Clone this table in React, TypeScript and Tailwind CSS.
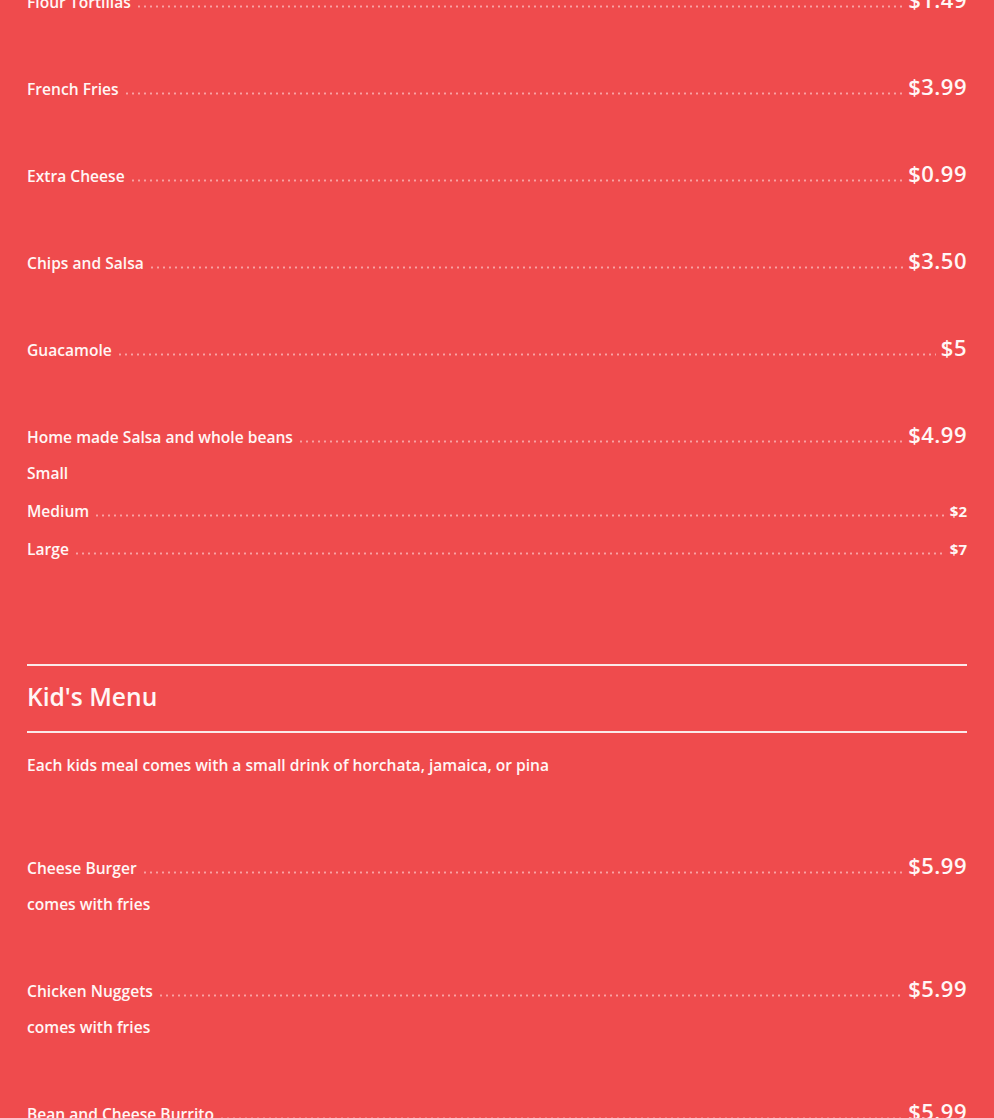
import React from "react";

type Sub = { name: string; price?: string };
type Item = { name: string; price: string; subs?: Sub[] };

const leader =
  "flex-1 mx-[5px] h-[3px] bg-[radial-gradient(circle,rgba(255,220,220,0.6)_0.9px,transparent_1.3px)] bg-[length:6px_3px] bg-repeat-x";

function Row({ item }: { item: Item }) {
  return (
    <div className={item.subs ? "-mb-[8px]" : ""}>
      <div className="flex items-baseline h-[26px]">
        <span className="text-[15.6px] font-semibold">{item.name}</span>
        <div className={leader} />
        <span className="text-[22px] font-semibold tracking-[0.5px]">{item.price}</span>
      </div>
      {item.subs?.map((s, i) => (
        <div
          key={s.name}
          className={"flex items-baseline h-[26px] " + (i === 0 ? "mt-[18px]" : "mt-[12px]")}
        >
          <span className="text-[15.6px] font-semibold">{s.name}</span>
          {s.price && (
            <>
              <div className={leader} />
              <span className="text-[15px] font-bold">{s.price}</span>
            </>
          )}
        </div>
      ))}
    </div>
  );
}

const sides: Item[] = [
  { name: "Flour Tortillas", price: "$1.49" },
  { name: "French Fries", price: "$3.99" },
  { name: "Extra Cheese", price: "$0.99" },
  { name: "Chips and Salsa", price: "$3.50" },
  { name: "Guacamole", price: "$5" },
  {
    name: "Home made Salsa and whole beans",
    price: "$4.99",
    subs: [{ name: "Small" }, { name: "Medium", price: "$2" }, { name: "Large", price: "$7" }],
  },
];

const kids: Item[] = [
  { name: "Cheese Burger", price: "$5.99", subs: [{ name: "comes with fries" }] },
  { name: "Chicken Nuggets", price: "$5.99", subs: [{ name: "comes with fries" }] },
  { name: "Bean and Cheese Burrito", price: "$5.99" },
];

export default function App() {
  return (
    <div
      className="w-full h-[1118px] overflow-hidden bg-[#ef4b4d] text-[#fff6f5]"
      style={{ fontFamily: "'Open Sans', Lato, sans-serif" }}
    >
      <div className="px-[27px] -mt-[17px]">
        <div className="flex flex-col gap-[61px]">
          {sides.map((it) => (
            <Row key={it.name} item={it} />
          ))}
        </div>
        <div className="mt-[108px] h-[2px] bg-[#fbe9e9]" />
        <h2 className="mt-[14px] text-[24.6px] leading-[34px] font-semibold">Kid's Menu</h2>
        <div className="mt-[17px] h-[2px] bg-[#fbe9e9]" />
        <p className="mt-[20px] text-[15.6px] leading-[24px] font-semibold">
          Each kids meal comes with a small drink of horchata, jamaica, or pina
        </p>
        <div className="mt-[72px] flex flex-col gap-[61px]">
          {kids.map((it) => (
            <Row key={it.name} item={it} />
          ))}
        </div>
      </div>
    </div>
  );
}
